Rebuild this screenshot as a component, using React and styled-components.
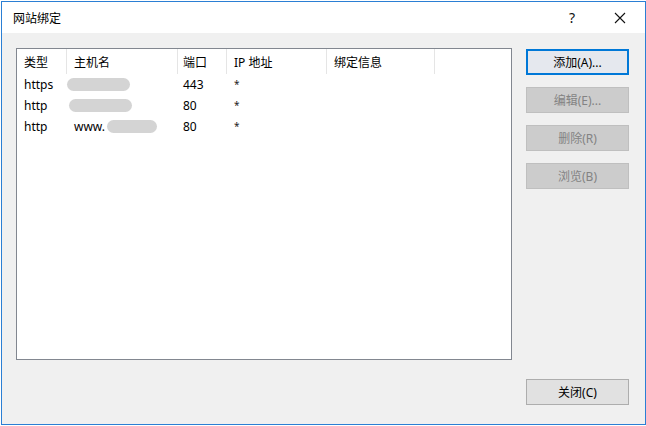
import React from "react";
import styled, { createGlobalStyle } from "styled-components";

const GlobalStyle = createGlobalStyle`
  html, body {
    margin: 0;
    padding: 0;
    background: #ffffff;
  }
  body {
    font-family: "Noto Sans", "Noto Sans CJK SC", sans-serif;
    font-size: 12px;
    color: #000;
  }
`;

const Window = styled.div`
  box-sizing: border-box;
  width: 645px;
  height: 424px;
  margin: 1px 0 0 1px;
  border: 1px solid #2b7fd4;
  display: flex;
  flex-direction: column;
  background: #f0f0f0;
`;

const TitleBar = styled.div`
  height: 31px;
  background: #ffffff;
  display: flex;
  align-items: center;
  padding: 0 0 0 11px;
  flex-shrink: 0;
`;

const Title = styled.div`
  flex: 1;
  font-size: 12px;
  padding-top: 1px;
`;

const TitleButton = styled.div`
  width: ${p => p.$w}px;
  height: 31px;
  display: flex;
  align-items: center;
  justify-content: center;
  font-size: 14px;
  color: #111;
`;

const Body = styled.div`
  flex: 1;
  display: flex;
  padding: 15px 15px 19px 14px;
  gap: 14px;
`;

const ListBox = styled.div`
  box-sizing: border-box;
  width: 496px;
  height: 312px;
  background: #fff;
  border: 1px solid #828790;
`;

const Row = styled.div`
  display: grid;
  grid-template-columns: 50px 111px 49px 100px 108px;
  height: ${p => (p.$header ? 25 : 21)}px;
  align-items: center;
`;

const Cell = styled.div`
  height: 100%;
  display: flex;
  align-items: center;
  padding-left: ${p => p.$pad ?? 7}px;
  border-right: ${p => (p.$header ? "1px solid #e5e5e5" : "none")};
  white-space: nowrap;
`;

const Star = styled.span`
  font-size: 10px;
  color: #222;
  margin-top: -2px;
`;

const Blur = styled.span`
  display: inline-block;
  width: ${p => p.$w}px;
  height: 13px;
  border-radius: 7px;
  background: #d4d4d4;
  margin-left: ${p => p.$ml ?? 0}px;
`;

const Side = styled.div`
  flex: 1;
  display: flex;
  flex-direction: column;
  justify-content: space-between;
  padding-top: 1px;
`;

const ButtonStack = styled.div`
  display: flex;
  flex-direction: column;
  gap: 12px;
`;

const Button = styled.button`
  box-sizing: border-box;
  width: 103px;
  height: 26px;
  font-family: inherit;
  font-size: 12px;
  padding: 0;
  border: ${p => (p.$focus ? "2px solid #0078d7" : "1px solid")};
  border-color: ${p =>
    p.$focus ? "#0078d7" : p.disabled ? "#bfbfbf" : "#adadad"};
  background: ${p => (p.$focus ? "#e5e8ee" : p.disabled ? "#cccccc" : "#e1e1e1")};
  color: ${p => (p.disabled ? "#838383" : "#000")};
`;

const rows = [
  { type: "https", port: "443", host: <Blur $w={63} $ml={-7} /> },
  { type: "http", port: "80", host: <Blur $w={63} $ml={-5} /> },
  {
    type: "http",
    port: "80",
    host: (
      <>
        www.
        <Blur $w={50} $ml={2} />
      </>
    ),
  },
];

export default function App() {
  return (
    <>
      <GlobalStyle />
      <Window>
        <TitleBar>
          <Title>网站绑定</Title>
          <TitleButton $w={46}>?</TitleButton>
          <TitleButton $w={50}>
            <svg width="12" height="12" viewBox="0 0 12 12">
              <path d="M1 1L11 11M11 1L1 11" stroke="#111" strokeWidth="1.1" />
            </svg>
          </TitleButton>
        </TitleBar>
        <Body>
          <ListBox>
            <Row $header>
              <Cell $header>类型</Cell>
              <Cell $header>主机名</Cell>
              <Cell $header $pad={5}>端口</Cell>
              <Cell $header>IP 地址</Cell>
              <Cell $header>绑定信息</Cell>
            </Row>
            {rows.map((r, i) => (
              <Row key={i}>
                <Cell>{r.type}</Cell>
                <Cell>{r.host}</Cell>
                <Cell $pad={5}>{r.port}</Cell>
                <Cell>
                  <Star>*</Star>
                </Cell>
                <Cell />
              </Row>
            ))}
          </ListBox>
          <Side>
            <ButtonStack>
              <Button $focus>添加(A)...</Button>
              <Button disabled>编辑(E)...</Button>
              <Button disabled>删除(R)</Button>
              <Button disabled>浏览(B)</Button>
            </ButtonStack>
            <Button>关闭(C)</Button>
          </Side>
        </Body>
      </Window>
    </>
  );
}
